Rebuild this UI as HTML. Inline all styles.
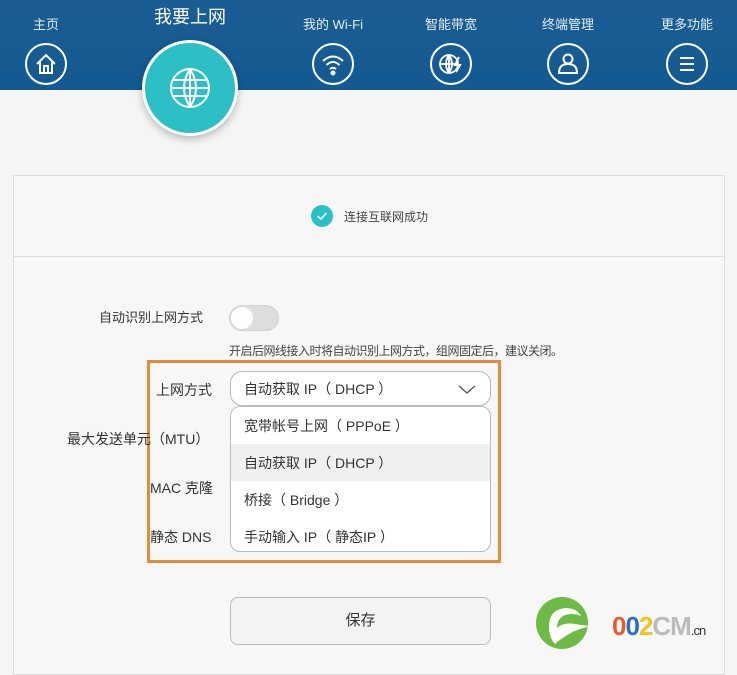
<!DOCTYPE html>
<html><head><meta charset="utf-8"><style>
*{margin:0;padding:0;box-sizing:border-box}
body{width:737px;height:653px;overflow:hidden;background:#f5f5f5;font-family:"Liberation Sans","Noto Sans CJK SC",sans-serif;color:#333;position:relative}
.hd{position:absolute;left:0;top:0;width:737px;height:90px;background:linear-gradient(#1b5d93,#135a92)}
.lb{position:absolute;color:#e6eef6;font-size:13px;top:14px;transform:translateX(-50%);white-space:nowrap}
.ic{position:absolute;top:43px;width:42px;height:42px;margin-left:-21px;border:2px solid #fff;border-radius:50%}
.ic svg{position:absolute;left:0;top:0}
.big{position:absolute;left:142px;top:40px;width:96px;height:96px;border-radius:50%;background:#2cbfc5;border:3px solid #fff;box-shadow:0 3px 8px rgba(0,0,0,.25)}
.card{position:absolute;left:13px;top:175px;width:712px;height:500px;border:1px solid #ddd;background:#f7f7f7}
.abs{position:absolute;white-space:nowrap}
.sel{position:absolute;left:230px;width:261px;border:1px solid #bbb;background:#fff}
</style></head><body>
<div class="hd"></div>
<div class="lb" style="left:46px">主页</div>
<div class="lb" style="left:190px;top:3px;font-size:18px;color:#fff">我要上网</div>
<div class="lb" style="left:333px">我的 Wi-Fi</div>
<div class="lb" style="left:451px">智能带宽</div>
<div class="lb" style="left:568px">终端管理</div>
<div class="lb" style="left:687px">更多功能</div>
<div class="ic" style="left:46px"><svg width="38" height="38" viewBox="0 0 38 38" fill="none" stroke="#fff" stroke-width="2"><path d="M10 19 L19 10 L28 19 M13 17 V28 H25 V17 M17 28 V21 H21 V28"/></svg></div>
<div class="ic" style="left:333px"><svg width="38" height="38" viewBox="0 0 38 38" fill="none" stroke="#fff" stroke-width="2"><path d="M9 16 Q19 7 29 16 M12.5 20 Q19 14 25.5 20 M16 24 Q19 21.5 22 24"/><circle cx="19" cy="28" r="1.5" fill="#fff"/></svg></div>
<div class="ic" style="left:451px"><svg width="38" height="38" viewBox="0 0 38 38" fill="none" stroke="#fff" stroke-width="1.8"><circle cx="17" cy="19" r="9"/><path d="M8 19 H26 M17 10 V28 M17 10 Q11 19 17 28 M17 10 Q23 19 17 28"/><path d="M27 12 L23 20 H28 L24 27" stroke-width="2"/></svg></div>
<div class="ic" style="left:568px"><svg width="38" height="38" viewBox="0 0 38 38" fill="none" stroke="#fff" stroke-width="2"><circle cx="19" cy="14" r="4.5"/><path d="M10 28 Q10 19 19 19 Q28 19 28 28 Z"/></svg></div>
<div class="ic" style="left:687px"><svg width="38" height="38" viewBox="0 0 38 38" fill="none" stroke="#fff" stroke-width="2"><path d="M12 13 H26 M12 19 H26 M12 25 H26"/></svg></div>
<div class="card"></div>
<div class="big"><svg width="90" height="90" viewBox="0 0 90 90" fill="none" stroke="#fff" stroke-width="2"><circle cx="45" cy="45" r="19"/><path d="M26 45 H64 M28 37 H62 M28 53 H62 M45 26 V64 M45 26 Q33 45 45 64 M45 26 Q57 45 45 64"/></svg></div>
<div class="abs" style="left:13px;top:256px;width:712px;border-top:1px solid #ddd"></div>
<div class="abs" style="left:311px;top:205px;width:22px;height:22px;border-radius:50%;background:#2cbfc5"><svg width="22" height="22" viewBox="0 0 22 22" fill="none" stroke="#fff" stroke-width="1.6"><path d="M6.5 11 L9.8 14 L15.5 8"/></svg></div>
<div class="abs" style="left:344px;top:208px;font-size:12px;color:#444">连接互联网成功</div>
<div class="abs" style="left:99px;top:307px;font-size:13px">自动识别上网方式</div>
<div class="abs" style="left:229px;top:305px;width:50px;height:26px;border-radius:13px;background:#ddd;border:1px solid #d2d2d2"><div style="position:absolute;left:1px;top:1px;width:22px;height:22px;border-radius:50%;background:#fff"></div></div>
<div class="abs" style="left:229px;top:342px;font-size:12px;color:#444;letter-spacing:-0.5px">开启后网线接入时将自动识别上网方式，组网固定后，建议关闭。</div>
<div class="abs" style="left:147px;top:360px;width:354px;height:203px;border:3px solid #e08b3d"></div>
<div class="abs" style="left:156px;top:380px;font-size:14px">上网方式</div>
<div class="abs" style="left:67px;top:429px;font-size:14px">最大发送单元（MTU）</div>
<div class="abs" style="left:150px;top:478px;font-size:14px">MAC 克隆</div>
<div class="abs" style="left:150px;top:527px;font-size:14px">静态 DNS</div>
<div class="sel" style="top:371px;height:35px;border-radius:12px"><div class="abs" style="left:13px;top:7px;font-size:14px">自动获取 IP（ DHCP ）</div><svg class="abs" style="left:226px;top:10px" width="20" height="14" viewBox="0 0 20 14" fill="none" stroke="#555" stroke-width="1.3"><path d="M2 4 L10 11 L18 4"/></svg></div>
<div class="sel" style="top:406px;height:146px;border-radius:10px;overflow:hidden">
<div style="position:absolute;left:0;top:37px;width:100%;height:37px;background:#f0f0f0"></div>
<div class="abs" style="left:13px;top:9px;font-size:14px">宽带帐号上网（ PPPoE ）</div>
<div class="abs" style="left:13px;top:46px;font-size:14px">自动获取 IP（ DHCP ）</div>
<div class="abs" style="left:13px;top:83px;font-size:14px">桥接（ Bridge ）</div>
<div class="abs" style="left:13px;top:120px;font-size:14px">手动输入 IP（ 静态IP ）</div>
</div>
<div class="abs" style="left:230px;top:597px;width:261px;height:48px;border:1px solid #bbb;border-radius:8px;background:#f3f3f3;text-align:center;line-height:46px;font-size:15px">保存</div>
<svg class="abs" style="left:535px;top:596px" width="60" height="54" viewBox="0 0 60 54"><circle cx="27" cy="27" r="26" fill="#6dbb45"/><path d="M14 30 Q14 14 30 12 Q42 12 46 20 Q36 16 28 20 Q22 24 22 32 Q28 26 40 28 Q52 30 58 30 Q44 32 34 38 Q24 44 20 48 Q14 42 14 30Z" fill="#fff"/></svg>
<div class="abs" style="left:612px;top:611px;font-size:26px;font-weight:bold;letter-spacing:-1px"><span style="color:#e85a28">0</span><span style="color:#2a6fc9">0</span><span style="color:#f1c31c">2</span><span style="color:#bbb">CM</span><span style="font-size:13px;color:#333;font-weight:normal">.cn</span></div>
</body></html>
